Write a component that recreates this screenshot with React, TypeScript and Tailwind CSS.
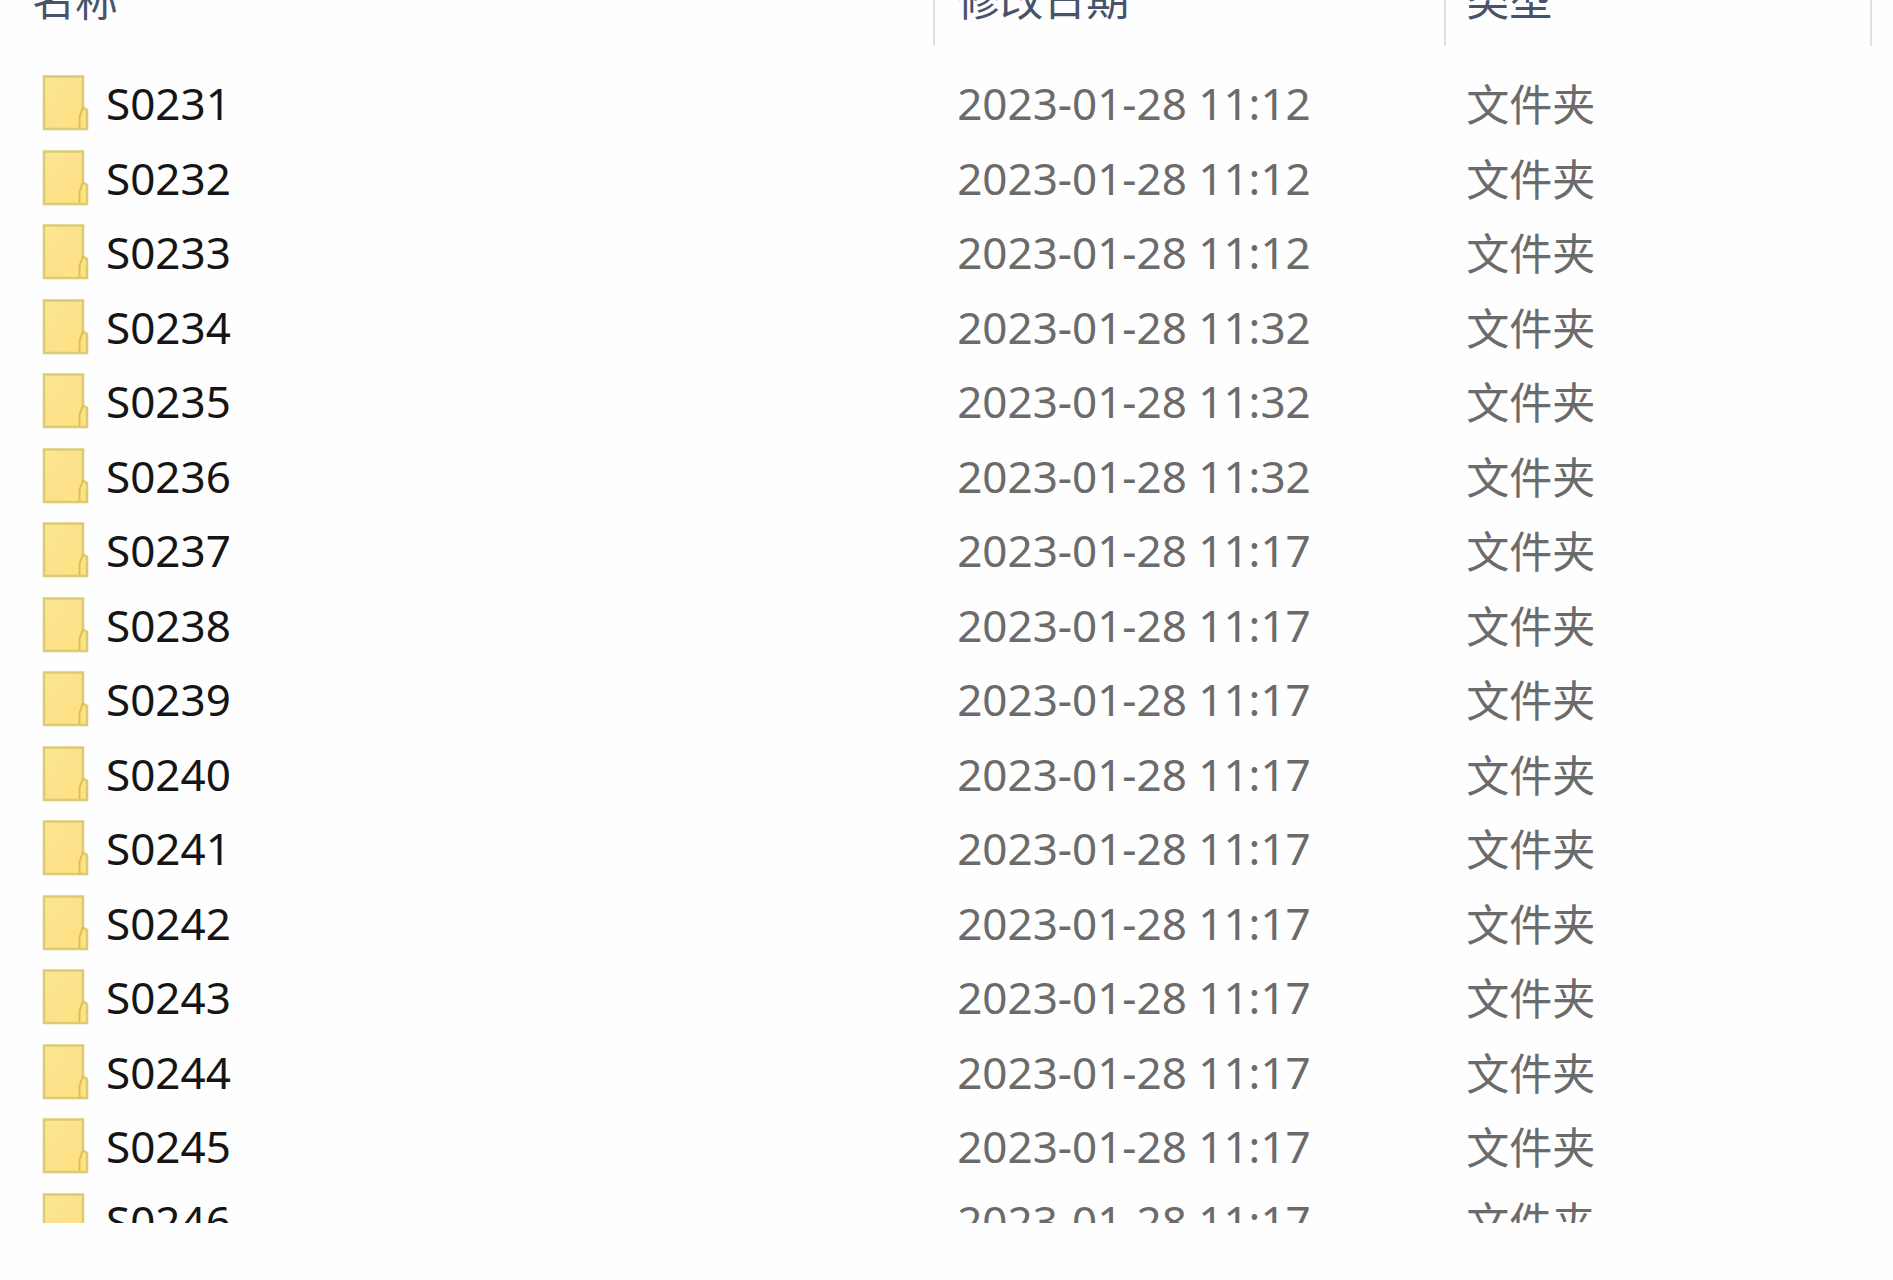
import type { ReactNode } from "react";

const files = [
  ["S0231", "11:12"],
  ["S0232", "11:12"],
  ["S0233", "11:12"],
  ["S0234", "11:32"],
  ["S0235", "11:32"],
  ["S0236", "11:32"],
  ["S0237", "11:17"],
  ["S0238", "11:17"],
  ["S0239", "11:17"],
  ["S0240", "11:17"],
  ["S0241", "11:17"],
  ["S0242", "11:17"],
  ["S0243", "11:17"],
  ["S0244", "11:17"],
  ["S0245", "11:17"],
  ["S0246", "11:17"],
];

function FolderIcon() {
  return (
    <svg className="h-14 w-12 shrink-0" viewBox="0 0 48 56" aria-hidden="true">
      <defs>
        <linearGradient id="folder" x1="0" y1="0" x2="1" y2="1">
          <stop offset="0" stopColor="#fbe892" />
          <stop offset="0.5" stopColor="#fde08c" />
          <stop offset="1" stopColor="#ffe47c" />
        </linearGradient>
      </defs>
      <path
        d="M2 1.5H41V32.5L45 35V54H2Z"
        fill="url(#folder)"
        stroke="#dacb74"
        strokeWidth="2.5"
      />
      <path d="M37.5 53V42L41 32" fill="none" stroke="#d9bf5e" strokeWidth="2" />
    </svg>
  );
}

function HeaderCell({ label, pad }: { label: string; pad: string }) {
  return (
    <th scope="col" className="h-[66px] p-0 text-left align-top font-normal">
      <div className={`flex h-[46px] items-end border-r-2 border-[#dfdfe1] pb-6 ${pad}`}>
        <button type="button" className="text-[43px] leading-[44px] text-[#46536b]">
          {label}
        </button>
      </div>
    </th>
  );
}

function Cell({ cut, className, children }: { cut: boolean; className: string; children: ReactNode }) {
  return (
    <td className="p-0">
      <div className={cut ? "h-[39px] overflow-hidden" : ""}>
        <div className={`flex h-[74px] items-center whitespace-nowrap leading-[60px] ${className}`}>{children}</div>
      </div>
    </td>
  );
}

export default function App() {
  return (
    <main className="min-h-screen overflow-hidden bg-[#fefefe] font-['Noto_Sans','Noto_Sans_CJK_SC',sans-serif]">
      <table className="w-full table-fixed border-collapse">
        <colgroup>
          <col className="w-[49.4%]" />
          <col className="w-[27%]" />
          <col className="w-[22.5%]" />
          <col />
        </colgroup>
        <thead>
          <tr>
            <HeaderCell label="名称" pad="pl-8" />
            <HeaderCell label="修改日期" pad="pl-[22px]" />
            <HeaderCell label="类型" pad="pl-5" />
            <td />
          </tr>
        </thead>
        <tbody>
          {files.map(([name, time], i) => {
            const cut = i === files.length - 1;
            return (
              <tr key={name} className={cut ? "align-top" : "align-top odd:h-[75px] even:h-[74px]"}>
                <Cell cut={cut} className="gap-4 pl-[42px] text-[44px] text-[#151515]">
                  <FolderIcon />
                  <span>{name}</span>
                </Cell>
                <Cell cut={cut} className="pl-[22px] text-[44px] text-[#6b6b6b]">
                  2023-01-28 {time}
                </Cell>
                <Cell cut={cut} className="pl-5 pt-1 text-[43px] text-[#6b6b6b]">
                  文件夹
                </Cell>
                <td />
              </tr>
            );
          })}
        </tbody>
      </table>
    </main>
  );
}
